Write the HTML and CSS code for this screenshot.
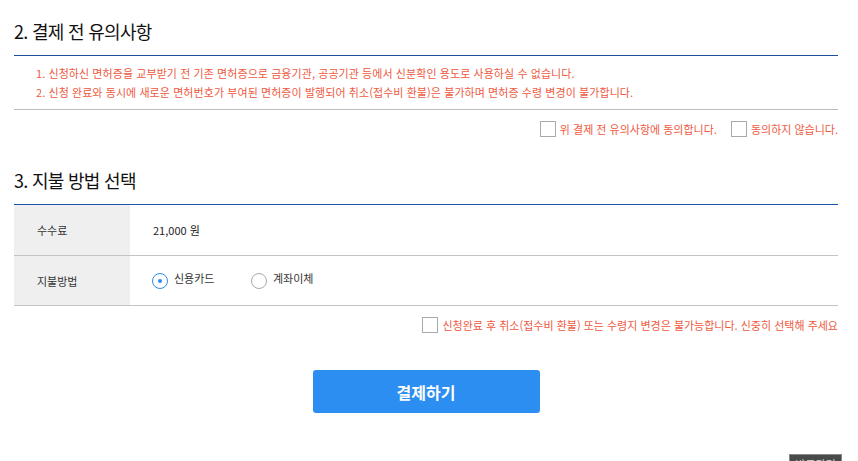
FILE: index.html
```html
<!DOCTYPE html>
<html lang="ko">
<head>
<meta charset="utf-8">
<link rel="stylesheet" href="styles.css">
</head>
<body>
<div class="wrap">
  <h2 class="sec-title">2. 결제 전 유의사항</h2>
  <ul class="notes">
    <li>1. 신청하신 면허증을 교부받기 전 기존 면허증으로 금융기관, 공공기관 등에서 신분확인 용도로 사용하실 수 없습니다.</li>
    <li>2. 신청 완료와 동시에 새로운 면허번호가 부여된 면허증이 발행되어 취소(접수비 환불)은 불가하며 면허증 수령 변경이 불가합니다.</li>
  </ul>
  <div class="agree-row">
    <label class="chk"><span class="box"></span><span>위 결제 전 유의사항에 동의합니다.</span></label>
    <label class="chk"><span class="box"></span><span>동의하지 않습니다.</span></label>
  </div>

  <h2 class="sec-title sec-3">3. 지불 방법 선택</h2>
  <div class="pay-table">
    <div class="row">
      <div class="th">수수료</div>
      <div class="td">21,000 원</div>
    </div>
    <div class="row">
      <div class="th">지불방법</div>
      <div class="td radios">
        <label class="radio on"><span class="dot"></span><span>신용카드</span></label>
        <label class="radio"><span class="dot"></span><span>계좌이체</span></label>
      </div>
    </div>
  </div>
  <div class="agree-row notice">
    <label class="chk"><span class="box"></span><span>신청완료 후 취소(접수비 환불) 또는 수령지 변경은 불가능합니다. 신중히 선택해 주세요</span></label>
  </div>
  <div class="btn-area">
    <button class="pay-btn">결제하기</button>
  </div>
</div>
<div class="float-btn">바로가기</div>
</body>
</html>
```

FILE: styles.css
```css
* { box-sizing: border-box; }
html, body { margin: 0; padding: 0; background: #fff; }
body {
  font-family: "Noto Sans CJK KR", "Noto Sans", sans-serif;
  color: #333;
  overflow: hidden;
  height: 461px;
}
.wrap {
  padding: 0 20px 0 14px;
}
.sec-title {
  margin: 19px 0 0;
  font-size: 18px;
  font-weight: 400;
  line-height: 24px;
  color: #111;
  padding-bottom: 12px;
  border-bottom: 1px solid #1d4f9c;
  letter-spacing: -0.7px;
}
.sec-3 {
  margin-top: 31px;
  border-bottom-color: #1b56ad;
}
.notes {
  list-style: none;
  margin: 0;
  padding: 8px 0 7px 22px;
  border-bottom: 1px solid #bdbdbd;
}
.notes li {
  font-size: 11px;
  line-height: 19px;
  color: #ee5a3f;
  letter-spacing: 0.07px;
}
.agree-row {
  display: flex;
  justify-content: flex-end;
  gap: 14px;
  padding-top: 11px;
}
.chk {
  display: flex;
  align-items: center;
  gap: 4px;
  font-size: 11px;
  line-height: 16px;
  color: #ee5a3f;
}
.box {
  width: 16px;
  height: 16px;
  border: 1px solid #a9a9a9;
  background: #fff;
  flex: none;
}
.pay-table {
  border-bottom: 1px solid #c4c4c4;
}
.row {
  display: flex;
  height: 50px;
}
.row + .row {
  border-top: 1px solid #c4c4c4;
}
.th {
  width: 116px;
  background: #efefef;
  padding-left: 23px;
  display: flex;
  align-items: center;
  font-size: 11px;
  color: #333;
}
.td {
  flex: 1;
  padding-left: 23px;
  display: flex;
  align-items: center;
  font-size: 11px;
  color: #222;
}
.radios { gap: 0; padding-left: 22px; }
.radio {
  display: flex;
  align-items: center;
  gap: 6px;
  width: 99px;
  font-size: 11px;
  color: #333;
  margin-top: -2px;
}
.dot {
  width: 16px;
  height: 16px;
  border-radius: 50%;
  border: 1px solid #aaa;
  position: relative;
  flex: none;
  margin-top: 3px;
}
.radio span:last-child { margin-top: -3px; }
.radio.on .dot { border-color: #2b8cf0; }
.radio.on .dot::after {
  content: "";
  position: absolute;
  left: 5px;
  top: 5px;
  width: 4px;
  height: 4px;
  border-radius: 50%;
  background: #2b8cf0;
}
.notice { padding-top: 11px; }
.btn-area {
  display: flex;
  justify-content: center;
  padding-top: 37px;
}
.pay-btn {
  width: 227px;
  height: 43px;
  border: none;
  border-radius: 3px;
  background: #2b8ef0;
  color: #fff;
  font-family: "Noto Sans CJK KR", sans-serif;
  font-size: 16px;
  font-weight: 700;
  cursor: pointer;
}
.float-btn {
  position: fixed;
  left: 789px;
  top: 454px;
  width: 53px;
  height: 22px;
  background: #4a4a4a;
  border: 1px solid #888;
  color: #ddd;
  font-size: 11px;
  text-align: center;
  line-height: 18px;
}
```
